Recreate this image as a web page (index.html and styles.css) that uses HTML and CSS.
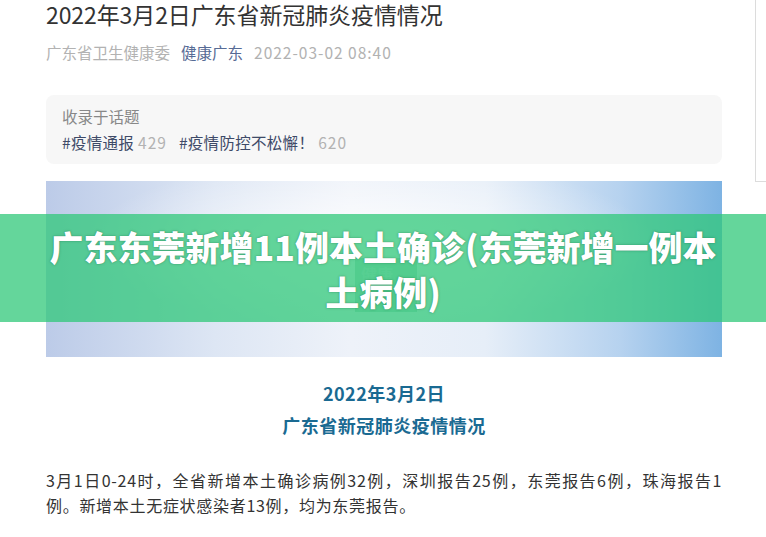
FILE: index.html
```html
<!DOCTYPE html>
<html lang="zh-CN">
<head>
    <meta charset="UTF-8">
    <meta name="viewport" content="width=device-width, initial-scale=1.0">
    <title>2022年3月2日广东省新冠肺炎疫情情况</title>
    <link rel="stylesheet" href="styles.css">
</head>
<body>
    <div class="page">
        <main class="article">
            <h1 class="article-title">2022年3月2日广东省新冠肺炎疫情情况</h1>
            <div class="meta">
                <span class="meta-org">广东省卫生健康委</span>
                <a class="meta-account" href="#">健康广东</a>
                <span class="meta-time">2022-03-02 08:40</span>
            </div>

            <div class="topics">
                <div class="topics-label">收录于话题</div>
                <div class="topics-list">
                    <a class="topic" href="#">#疫情通报</a><span class="topic-count">429</span><a class="topic" href="#">#疫情防控不松懈！</a><span class="topic-count">620</span>
                </div>
            </div>

            <div class="cover">
                <div class="cover-badge">健康<br>广东</div>
            </div>

            <h2 class="section-date">2022年3月2日</h2>
            <h2 class="section-title">广东省新冠肺炎疫情情况</h2>

            <p class="body-text">3月1日0-24时，全省新增本土确诊病例32例，深圳报告25例，东莞报告6例，珠海报告1例。新增本土无症状感染者13例，均为东莞报告。</p>
        </main>
        <aside class="side"></aside>
    </div>

    <div class="banner">广东东莞新增11例本土确诊(东莞新增一例本土病例)</div>
</body>
</html>
```

FILE: styles.css
```css
* {
    box-sizing: border-box;
    margin: 0;
    padding: 0;
}

body {
    font-family: "Noto Sans CJK SC", "Liberation Sans", sans-serif;
    background-color: #fff;
    color: #333;
    overflow: hidden;
}

a {
    text-decoration: none;
}

.page {
    display: flex;
    align-items: flex-start;
}

.article {
    width: 676px;
    margin-left: 46px;
    flex-shrink: 0;
}

.side {
    flex: 1;
    height: 182px;
    margin-left: 33px;
    border-left: 1px solid #dcdcdc;
    border-bottom: 1px solid #dcdcdc;
}

.article-title {
    font-size: 23px;
    font-weight: normal;
    line-height: 28px;
    color: #333;
    letter-spacing: -0.1px;
}

.meta {
    display: flex;
    gap: 11px;
    font-size: 15.5px;
    line-height: 22px;
    margin-top: 13px;
}

.meta-org,
.meta-time {
    color: #b2b2b2;
}

.meta-time {
    letter-spacing: 1px;
}

.meta-account {
    color: #576b95;
}

.topics {
    margin-top: 32px;
    padding: 8px 16px 9px;
    background-color: #f7f7f7;
    border-radius: 8px;
    font-size: 15.5px;
    line-height: 26px;
}

.topics-label {
    color: #888;
}

.topics-list {
    letter-spacing: 0.3px;
}

.topic {
    color: #3e4a68;
}

.topic-count {
    color: #b2b2b2;
    margin: 0 12px 0 4px;
    letter-spacing: 1px;
}

.cover {
    margin-top: 17px;
    height: 176px;
    position: relative;
    background:
        radial-gradient(ellipse 60% 70% at 48% 35%, rgba(255, 255, 255, 0.9), rgba(255, 255, 255, 0) 70%),
        linear-gradient(90deg, #bccbe8 0%, #dde6f4 25%, #eef2f9 45%, #e6eef8 65%, #b6d2ef 85%, #7eb3e3 100%);
}

.cover-badge {
    position: absolute;
    left: 309px;
    top: 77px;
    width: 62px;
    height: 54px;
    padding: 6px 0 0 6px;
    background-color: rgba(40, 150, 100, 0.3);
    color: rgba(255, 255, 255, 0.3);
    font-size: 16px;
    font-weight: bold;
    line-height: 20px;
}

.section-date,
.section-title {
    text-align: center;
    color: #1a6a92;
    font-size: 18px;
    font-weight: bold;
    line-height: 26px;
    letter-spacing: 0.5px;
}

.section-date {
    margin-top: 23px;
}

.section-title {
    margin-top: 6px;
}

.body-text {
    margin-top: 30px;
    font-size: 16px;
    line-height: 25px;
    letter-spacing: 0.7px;
    text-align: justify;
    color: #333;
}

/* title strip laid over the page */
.banner {
    position: absolute;
    left: 0;
    top: 214px;
    width: 100%;
    height: 108px;
    padding: 10px 40px 0;
    background-color: rgba(46, 200, 120, 0.74);
    color: #fff;
    text-align: center;
    font-size: 34px;
    font-weight: 900;
    line-height: 45px;
    text-shadow: 0 0 1px rgba(0, 80, 40, 0.5), 0 0 3px rgba(0, 80, 40, 0.25);
}
```
